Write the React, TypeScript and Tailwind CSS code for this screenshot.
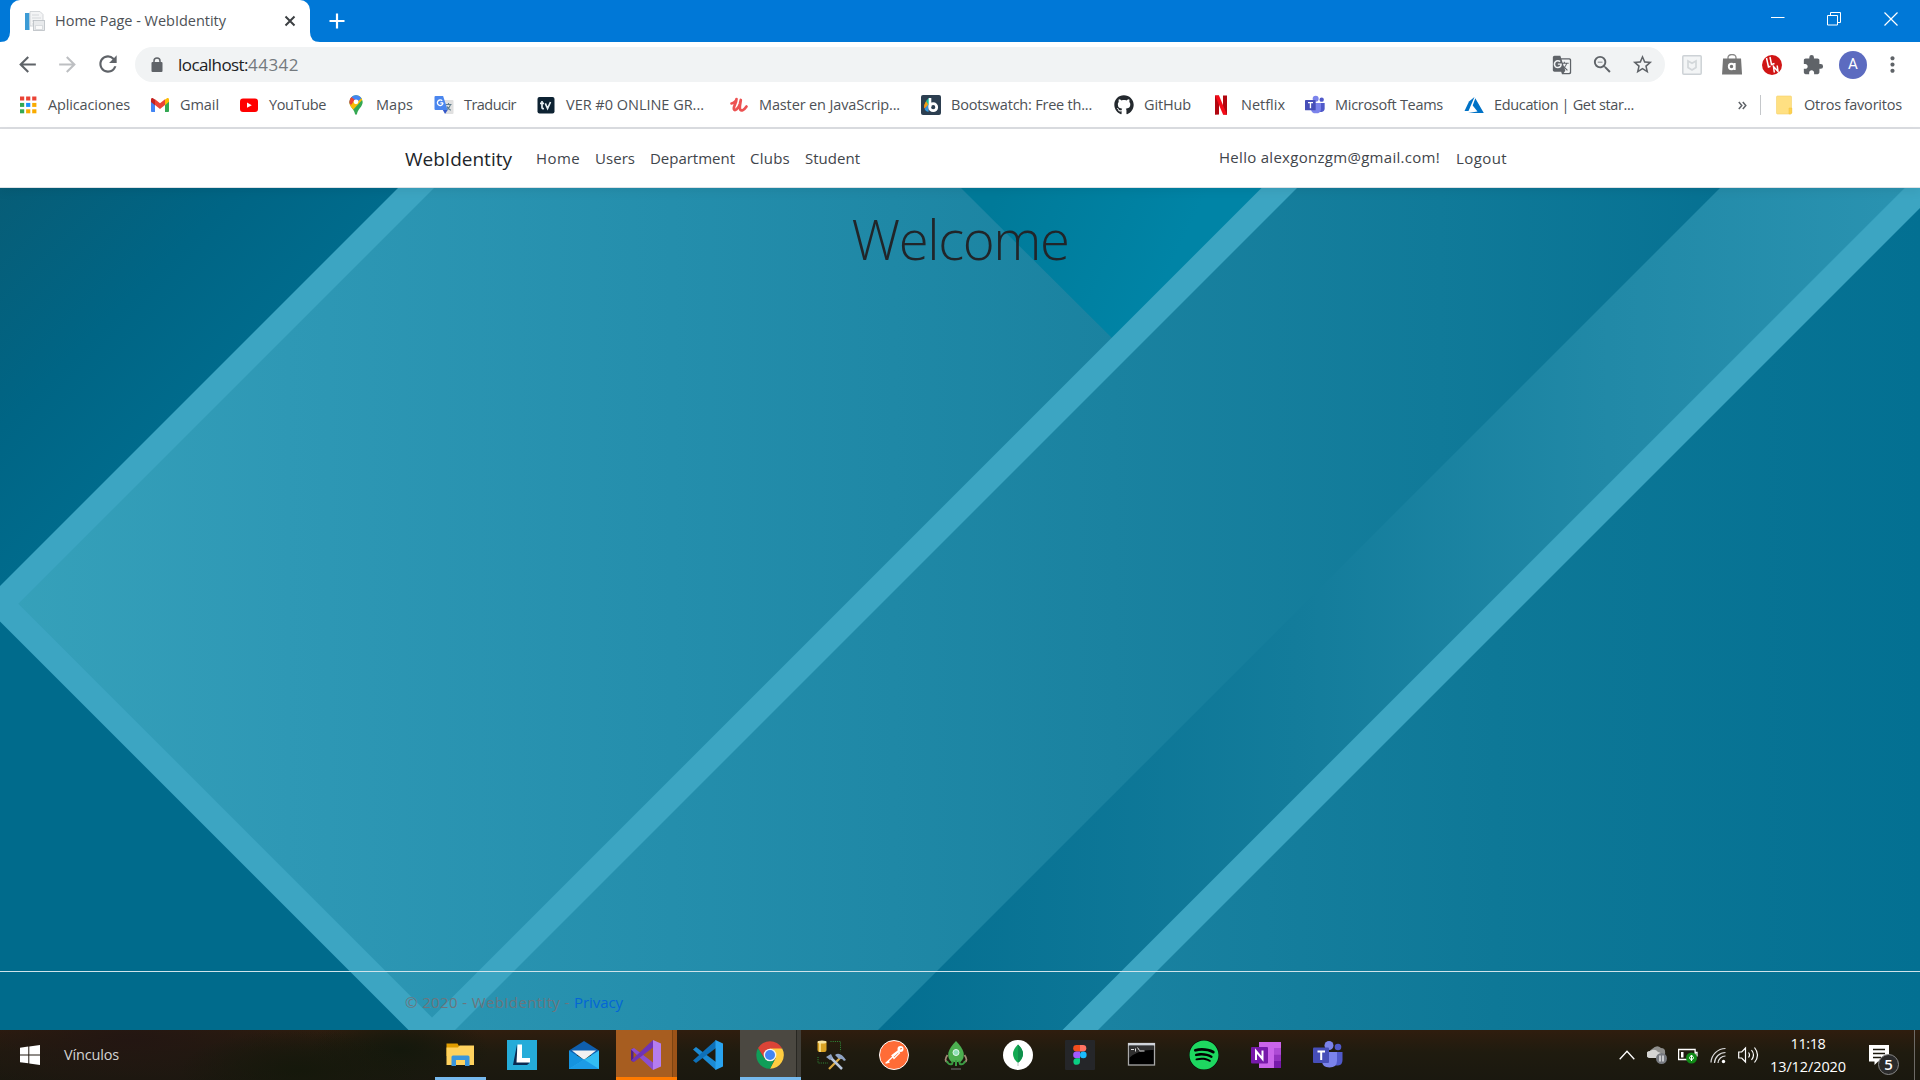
import { useLayoutEffect, useRef, useState } from "react";
import type { ReactNode } from "react";
import {
  MdArrowBack, MdArrowForward, MdRefresh, MdGTranslate,
  MdZoomOut, MdStarBorder, MdExtension, MdMoreVert,
} from "react-icons/md";
import { FaGithub, FaSpotify } from "react-icons/fa";

/** Text whose tracking is adjusted so that it spans exactly `w` pixels. */
function Fit({ w, children, className = "" }: { w: number; children: string; className?: string }) {
  const ref = useRef<HTMLSpanElement>(null);
  const [ls, setLs] = useState(0);
  useLayoutEffect(() => {
    if (ref.current) {
      const natural = ref.current.getBoundingClientRect().width;
      setLs((w - natural) / children.length);
    }
  }, [w, children]);
  return (
    <span ref={ref} className={"inline-block whitespace-pre " + className} style={{ letterSpacing: ls }}>
      {children}
    </span>
  );
}

const Svg = ({ s = 20, vb, children }: { s?: number; vb?: string; children: ReactNode }) => (
  <svg width={s} height={s} viewBox={vb ?? `0 0 ${s} ${s}`} className="block shrink-0">{children}</svg>
);

/* ---------- bookmark icons ---------- */
const appColors = ["#ea4335", "#ea4335", "#ea4335", "#34a853", "#1a90ff", "#f9ab00", "#34a853", "#f9ab00", "#f9ab00"];
const AppsIcon = () => (
  <Svg>{appColors.map((c, i) => <rect key={i} x={2 + (i % 3) * 6.1} y={1.5 + Math.floor(i / 3) * 6.4} width="4.2" height="4" fill={c} />)}</Svg>
);
const GmailIcon = () => (
  <Svg>
    <path d="M1 5v11.2c0 .5.4.8.8.8H5V8z" fill="#4285f4" />
    <path d="M19 5v11.2c0 .5-.4.8-.8.8H15V8z" fill="#34a853" />
    <path d="M15 4.500 17 3.300c1-.6 2 0 2 1.500v2l-4 3.400z" fill="#fbbc04" />
    <path d="M5 4.300 10 8.200l5-3.900v5.600l-5 4-5-4z" fill="#ea4335" />
    <path d="M1 4.800c0-1.500 1-2.100 2-1.500l2 1.200v5.700L1 7z" fill="#c5221f" />
  </Svg>
);
const YouTubeIcon = () => (
  <Svg><rect x="1" y="3.500" width="18" height="13.500" rx="3" fill="#f00" /><path d="m8 7.600 4.800 2.600L8 12.800z" fill="#fff" /></Svg>
);
const MapsIcon = () => (
  <Svg>
    <clipPath id="pin"><path d="M10 .3a6.600 6.600 0 0 0-6.700 6.600c0 4.600 4.700 6.600 5.700 12 .2 1 1.800 1 2 0 1-5.400 5.700-7.400 5.700-12A6.600 6.600 0 0 0 10 .3z" /></clipPath>
    <g clipPath="url(#pin)">
      <rect width="20" height="20" fill="#34a853" />
      <path d="m8 4 9-6v6L6 16 2 10z" fill="#fbbc04" />
      <path d="M6 -1h9l2 3-6 5-6-4z" fill="#4285f4" />
      <path d="M2 3 5.500 2 9 5 5 10 3 8z" fill="#ea4335" />
    </g>
    <circle cx="10" cy="6.800" r="2.400" fill="#fff" />
  </Svg>
);
const TranslateIcon = () => (
  <Svg>
    <path d="M8 5h10.500q1 0 1 1v12q0 1-1 1H12z" fill="#e0e0e0" />
    <path d="M11.500 9.500h6M14.500 8v1.500M12.500 15c2-1.400 3.400-3 4-5.300M13 11.500c.6 1.400 2 2.800 3.800 3.800" stroke="#607d8b" strokeWidth="1.100" fill="none" />
    <path d="M1.500 1h7.600l4.600 14H1.500q-1 0-1-1V2q0-1 1-1z" fill="#4a86ee" />
    <path d="m8.800 15 4.900 0-2.600 4z" fill="#3457c8" />
    <path d="M9 7.800H6.400M9 7.800a2.800 2.800 0 1 1-.8-2" stroke="#fff" strokeWidth="1.300" fill="none" />
  </Svg>
);
const TvIcon = () => (
  <Svg>
    <rect x="1.500" y="2" width="17" height="16.500" rx="2" fill="#0d2232" />
    <path d="M6 6v6.500q0 1.300 2 1M4 8.300h4M9.300 8.300l2.300 5.200L14.500 7" stroke="#e8f0f4" strokeWidth="1.700" fill="none" />
  </Svg>
);
const UdemyIcon = () => (
  <Svg>
    <path d="M2.500 8.500C5 8 7.500 5.500 7.500 4 7.500 8 4.200 11.500 4.800 14c.8 3 4.700-.5 6-5l1-4C11.500 8.500 10 12.500 11.300 14.700c1.200 1.600 3.700.5 6.200-3.200" stroke="#ec5252" strokeWidth="2.700" fill="none" strokeLinecap="round" strokeLinejoin="round" />
  </Svg>
);
const BootswatchIcon = () => (
  <Svg>
    <rect width="20" height="20" rx="2" fill="#2c3e50" />
    <path d="M7.500 4v12L3 13z" fill="#e8503a" /><path d="M7.500 4v7L3 13q0-4 1.500-6z" fill="#f39c12" />
    <path d="M8.500 2.500v9L5 6z" fill="#18bc9c" /><path d="M7.500 9v8q-3-.5-4-3z" fill="#3498db" />
    <path d="M9 3v9" stroke="#fff" strokeWidth="2.600" />
    <circle cx="12.200" cy="12.200" r="3.500" fill="none" stroke="#fff" strokeWidth="2.800" />
  </Svg>
);
const NetflixIcon = () => (
  <Svg>
    <path d="M4 .5h4v19l-4 .3zM12 .5h4v19.300l-4-.3z" fill="#b1060f" /><path d="M4 .5h4l8 19.300-4-.4z" fill="#f50a17" />
  </Svg>
);
const TeamsIcon = ({ s = 20 }: { s?: number }) => (
  <Svg s={s} vb="0 0 30 30">
    <circle cx="25" cy="7" r="3.300" fill="#5059c9" /><circle cx="16" cy="5.500" r="4.500" fill="#7b83eb" />
    <path d="M21 12h8.500v8q0 5-4.500 5.500h-4z" fill="#5059c9" />
    <path d="M9 12h15v8.500q0 7-7.500 7t-7.500-7z" fill="#7b83eb" />
    <rect x="0" y="7.500" width="16" height="15.500" rx="1" fill="#464eb8" />
    <path d="M4.500 11.500h7.500M8.200 11.500v8.500" stroke="#fff" strokeWidth="2" />
  </Svg>
);
const AzureIcon = () => (
  <Svg><path d="M10.500 2 5 6.500.5 16h4z" fill="#0072c6" /><path d="m11.300 3.200-2.600 7.300 4.800 6-9.300 1.500H19.800z" fill="#0072c6" /></Svg>
);
const FolderIcon = () => (
  <Svg><path d="M3.500 1h13q1 0 1 1v16q0 1-1 1h-13q-1 0-1-1V2q0-1 1-1z" fill="#ffe082" stroke="#f5d26a" strokeWidth=".6" /><path d="M15 13h2.800v5q-.6 1-2.800 1z" fill="#ffd24c" stroke="#f0c040" strokeWidth=".5" /></Svg>
);

const bookmarks: { icon: ReactNode; label: string; box: string; w: number }[] = [
  { icon: <AppsIcon />, label: "Aplicaciones", box: "w-[132px]", w: 82 },
  { icon: <GmailIcon />, label: "Gmail", box: "w-[89px]", w: 39 },
  { icon: <YouTubeIcon />, label: "YouTube", box: "w-[107px]", w: 57 },
  { icon: <MapsIcon />, label: "Maps", box: "w-[88px]", w: 37 },
  { icon: <TranslateIcon />, label: "Traducir", box: "w-[102px]", w: 52 },
  { icon: <TvIcon />, label: "VER #0 ONLINE GR...", box: "w-[193px]", w: 138 },
  { icon: <UdemyIcon />, label: "Master en JavaScrip...", box: "w-[192px]", w: 141 },
  { icon: <BootswatchIcon />, label: "Bootswatch: Free th...", box: "w-[193px]", w: 141 },
  { icon: <FaGithub size={20} color="#24292e" />, label: "GitHub", box: "w-[97px]", w: 47 },
  { icon: <NetflixIcon />, label: "Netflix", box: "w-[94px]", w: 44 },
  { icon: <TeamsIcon />, label: "Microsoft Teams", box: "w-[159px]", w: 108 },
  { icon: <AzureIcon />, label: "Education | Get star...", box: "w-[190px]", w: 140 },
];

/* ---------- browser chrome ---------- */
function TitleBar() {
  return (
    <div className="flex h-[42px] items-start bg-[#0078d7]">
      <svg width="10" height="42" className="shrink-0"><path d="M10 32v10H0q10 0 10-10z" fill="#fff" /></svg>
      <div className="flex h-[42px] w-[300px] items-center rounded-t-[10px] bg-white pl-[15px]">
        <Svg s={20}>
          <rect x="0" y="2" width="4.500" height="17" fill="#3c9bd5" />
          <path d="M5 .5h10l3 3V15H5z" fill="#f3f4f5" stroke="#c9cdd1" strokeWidth=".8" />
          <path d="M7 4h7M7 7h9M7 10h5M7 13h4" stroke="#d4d7da" />
          <rect x="8.500" y="9.500" width="11" height="10" fill="#e8eaec" stroke="#b9bdc2" strokeWidth=".8" />
          <path d="M10.500 14.500h7v4h-7z" fill="#fafafa" stroke="#c9cdd1" strokeWidth=".6" />
        </Svg>
        <Fit w={171} className="ml-[10px] text-[14.5px] text-[#4d5156]">Home Page - WebIdentity</Fit>
        <svg width="12" height="12" className="ml-[58px]"><path d="m1.500 1.500 9 9m0-9-9 9" stroke="#3c4043" strokeWidth="2" /></svg>
      </div>
      <svg width="10" height="42" className="shrink-0"><path d="M0 32v10h10q-10 0-10-10z" fill="#fff" /></svg>
      <svg width="16" height="16" className="ml-[9px] mt-[13px]"><path d="M8 .5v15M.5 8h15" stroke="#fff" strokeWidth="2.200" /></svg>
      <div className="ml-auto flex pr-[22px]">
        <svg width="14" height="14" className="mt-[11px]"><path d="M0 6.500h13.500" stroke="#fff" /></svg>
        <svg width="14" height="14" className="ml-[42px] mt-[12px]"><path d="M.5 3.500h10v9.500H.5zM3.500 3.500V.5h10v10h-3" stroke="#fff" fill="none" /></svg>
        <svg width="14" height="14" className="ml-[43px] mt-[12px]"><path d="m.5.5 13 13m0-13-13 13" stroke="#fff" strokeWidth="1.200" /></svg>
      </div>
    </div>
  );
}

function Toolbar() {
  return (
    <div className="flex h-[44px] items-center bg-white pl-[15px] text-[#5f6368]">
      <MdArrowBack size={25} />
      <MdArrowForward size={25} className="ml-[15px] text-[#bdbfc2]" />
      <MdRefresh size={26} className="ml-[15px]" />
      <div className="ml-[14px] mt-px flex h-[35px] w-[1530px] items-center rounded-full bg-[#f1f3f4] pl-[16px] pr-[11px]">
        <svg width="12" height="16" className="mt-px"><rect x=".5" y="5" width="11" height="10" rx="1" fill="#5f6368" /><path d="M3 5.500V4a3 3 0 0 1 6 0v1.500" fill="none" stroke="#5f6368" strokeWidth="1.500" /></svg>
        <Fit w={70} className="ml-[15px] text-[17px] text-[#202124]">localhost:</Fit>
        <Fit w={51} className="text-[17px] text-[#74797e]">44342</Fit>
        <MdGTranslate size={20} className="ml-auto" />
        <MdZoomOut size={23} className="ml-[19px]" />
        <MdStarBorder size={23} className="ml-[17px]" />
      </div>
      <div className="ml-[17px] mt-px flex items-center">
        <Svg s={20}>
          <rect x=".8" y=".8" width="18.400" height="18.400" rx="1" fill="#f3f5f6" stroke="#cdd2d6" strokeWidth="1.500" />
          <path d="M6 6v6.500L10 15l4-2.500V6l-4 2.300z" fill="none" stroke="#d3d7da" strokeWidth="1.700" />
        </Svg>
        <svg width="20" height="21" className="ml-[20px]">
          <path d="M6 5V3.500a4 3 0 0 1 8 0V5" fill="none" stroke="#888" strokeWidth="1.300" />
          <path d="M1 4.500h18l1 16H0z" fill="#757575" />
          <circle cx="9.500" cy="12.500" r="2.700" fill="none" stroke="#fff" strokeWidth="1.900" /><path d="M12.700 9v7" stroke="#fff" strokeWidth="1.900" />
        </svg>
        <svg width="20" height="20" className="ml-[20px]">
          <circle cx="10" cy="10" r="10" fill="#d01515" />
          <path d="m4.500 3 2 9 2-.7M8 2l1.500 7.500 3-1M12.300 17.500l-.8-6 4.500 5-.8-6" fill="none" stroke="#fff" strokeWidth="1.500" />
        </svg>
        <MdExtension size={22} className="ml-[20px]" />
        <div className="ml-[15px] flex h-7 w-7 items-center justify-center rounded-full bg-[#5c6bc0] font-[Roboto] text-[15px] text-white">A</div>
        <MdMoreVert size={25} className="ml-[13px]" />
      </div>
    </div>
  );
}

function BookmarkBar() {
  return (
    <div className="flex h-[43px] items-center border-b-2 border-[#dadce0] bg-white pb-[3px] pl-[18px] text-[14.5px] text-[#4d5156]">
      {bookmarks.map((b) => (
        <div key={b.label} className={"flex shrink-0 items-center gap-[10px] " + b.box}>
          {b.icon}
          <Fit w={b.w}>{b.label}</Fit>
        </div>
      ))}
      <svg width="9" height="9" className="ml-[84px]"><path d="m.8 1 3 3.500-3 3.500M4.800 1l3 3.500-3 3.500" stroke="#5f6368" strokeWidth="1.500" fill="none" /></svg>
      <div className="ml-[13px] h-5 w-px bg-[#c4c7ca]" />
      <div className="ml-[13px] flex items-center gap-[10px]"><FolderIcon /><Fit w={98}>Otros favoritos</Fit></div>
    </div>
  );
}

/* ---------- web page ---------- */
function NavBar() {
  return (
    <header className="relative z-10 h-[59px] border-b border-[#dee2e6] bg-white shadow-[0_4px_10px_rgba(0,0,0,0.06)]">
      <div className="ml-[405px] flex h-[59px] w-[1102px] items-center text-[15px] text-[#3f454b]">
        <Fit w={107} className="pt-[2px] text-[19px] text-[#212529]">WebIdentity</Fit>
        <div className="ml-[24px] flex gap-[15px]">
          <Fit w={44}>Home</Fit>
          <Fit w={40}>Users</Fit>
          <Fit w={85}>Department</Fit>
          <Fit w={40}>Clubs</Fit>
          <Fit w={55}>Student</Fit>
        </div>
        <div className="ml-auto flex items-center gap-[16px]">
          <Fit w={221} className="pb-[2px]">Hello alexgonzgm@gmail.com!</Fit>
          <Fit w={51}>Logout</Fit>
        </div>
      </div>
    </header>
  );
}

const stop = (o: number, c: string) => <stop key={o} offset={o} stopColor={c} />;

/** Diagonal glass panels, drawn in window coordinates. Each one overlaps the panel before it. */
function Backdrop() {
  return (
    <svg className="absolute inset-0" width="1920" height="842" viewBox="0 188 1920 842">
      <defs>
        <linearGradient id="main" gradientUnits="userSpaceOnUse" x1="0" y1="0" x2="1920" y2="0">
          {stop(0, "#36a1ba")}{stop(0.15, "#2e98b5")}{stop(0.35, "#248eac")}{stop(0.58, "#1a82a0")}{stop(0.75, "#107a99")}{stop(0.9, "#067192")}{stop(1, "#056f90")}
        </linearGradient>
        <linearGradient id="strip" gradientUnits="userSpaceOnUse" x1="880" y1="0" x2="1920" y2="0">
          {stop(0, "#046f91")}{stop(0.4, "#137c9b")}{stop(0.7, "#2189a7")}{stop(1, "#2a93b1")}
        </linearGradient>
        <linearGradient id="right" gradientUnits="userSpaceOnUse" x1="1070" y1="0" x2="1920" y2="0">
          {stop(0, "#1b83a2")}{stop(0.5, "#0e7897")}{stop(1, "#037092")}
        </linearGradient>
        <linearGradient id="corner" gradientUnits="userSpaceOnUse" x1="0" y1="188" x2="200" y2="388">
          {stop(0, "#075d77")}{stop(0.6, "#006585")}{stop(1, "#006b8c")}
        </linearGradient>
        <linearGradient id="tri" gradientUnits="userSpaceOnUse" x1="1000" y1="188" x2="1170" y2="270">
          {stop(0, "#007a99")}{stop(1, "#0084a6")}
        </linearGradient>
      </defs>
      <rect y="188" width="1920" height="842" fill="url(#right)" />
      <path d="M0 188h1905L1063 1030H0z" fill="url(#strip)" />
      <path d="M0 188H1720L878 1030H0z" fill="url(#main)" />
      <path d="M0 188h410L0 598z" fill="url(#corner)" />
      <path d="M0 610 420 1030H0z" fill="#006b8c" />
      <path d="M961 188h320L1122 348z" fill="url(#tri)" />
      <path d="M398 188h36L18.300 603.700 432 1017.500 1261.500 188h35.500L455 1030H408.500L0 621.500V586z" fill="#3ca5c2" />
      <path d="M1904.500 188H1920v20L1098 1030h-35.500z" fill="#3ca5c2" />
    </svg>
  );
}

function Page() {
  return (
    <main className="relative flex h-[842px] flex-col overflow-hidden">
      <Backdrop />
      <h1 className="relative mt-[13px] text-center font-light leading-[76px] text-[#212529]">
        <Fit w={217} className="text-[54.5px]">Welcome</Fit>
      </h1>
      <footer className="relative mt-auto h-[59px] border-t border-[#cfe3ea]">
        <div className="ml-[405px] flex h-[60px] w-[1110px] items-center text-[15px] text-[#6c757d]">
          <Fit w={169}>© 2020 - WebIdentity - </Fit>
          <Fit w={49} className="text-[#0366d6]">Privacy</Fit>
        </div>
      </footer>
    </main>
  );
}

/* ---------- taskbar ---------- */
const ExplorerIcon = () => (
  <Svg s={30}>
    <path d="M1.500 3.500h11l1.500 2.500v10H1.500z" fill="#e09d00" /><path d="M1.500 7.500H13l1.500-2H29v19.500H1.500z" fill="#ffd25e" />
    <path d="M6.500 26V17q0-1.500 1.500-1.500h15q1.500 0 1.500 1.500v9H20v-6h-9v6z" fill="#3a96dd" />
  </Svg>
);
const LIcon = () => (
  <Svg s={30}><rect width="30" height="30" fill="#25acd9" /><path d="m10 4.500-4 20.500h14l3-2.500-12-2z" fill="#0a2a52" /><path d="M10.500 4.500h4.500v13.500h8v4.500H9.500z" fill="#fff" /></Svg>
);
const MailIcon = () => (
  <Svg s={30}>
    <path d="M0 10.500 15 1l15 9.500V15H0z" fill="#0f5fae" /><path d="M3 10.500h24L15 20z" fill="#f2f2f2" />
    <path d="M0 10.500 30 29H0z" fill="#1593df" /><path d="M0 29 30 10.500V29z" fill="#32bdf3" /><path d="m15 19.500 15 9.500H0z" fill="#1c9be6" />
  </Svg>
);
const VisualStudioIcon = () => (
  <Svg s={30}>
    <path d="M0 9.500 2.500 8v14L0 20.500z" fill="#52218a" />
    <path d="m0 9.500 3-1.500L22 22.500V30z" fill="#8b4fcf" /><path d="M0 20.500 22 0v7.500L3 22z" fill="#6f33b5" />
    <path d="m22 0 8 3.500v23L22 30z" fill="#b57df0" />
  </Svg>
);
const VSCodeIcon = () => (
  <Svg s={30}><path d="m0 9.500 3-2.500L23 22V30z" fill="#1b8ad3" /><path d="m0 20.500 3 2.500L23 8V0z" fill="#0e70b8" /><path d="m22.500 0 7.500 3.500v23L22.500 30z" fill="#29a3ef" /></Svg>
);
const ChromeIcon = () => (
  <Svg s={30} vb="-15 -15 30 30">
    <path d="M0 0-11.900-6.900A13.800 13.800 0 0 1 11.900-6.900z" fill="#db4437" /><path d="M0-6.500H12.200A13.800 13.800 0 0 1 0 13.800L5.600 3.200z" fill="#ffcd40" />
    <path d="M-11.900-6.900-5.600 3.300 0 6.500 5 4 0 13.800A13.800 13.800 0 0 1-11.900-6.900z" fill="#0f9d58" />
    <path d="M-11.900-6.900-5.600 3.200-2-6z" fill="#db4437" /><circle r="6.300" fill="#f4f4f4" /><circle r="5" fill="#4285f4" />
  </Svg>
);
const SqlToolsIcon = () => (
  <Svg s={30}>
    <rect x=".5" y="1" width="9" height="11" rx="2" fill="#d9a224" /><ellipse cx="5" cy="2" rx="4.500" ry="1.500" fill="#f7e3a0" /><path d="M3 3v9" stroke="#ffe89a" strokeWidth="1.500" />
    <path d="M13.500 1.500h10v10M1 17v6h10" stroke="#2f8f3a" strokeDasharray="1 1.200" fill="none" />
    <path d="m12 29 12-12" stroke="#d9a640" strokeWidth="2.300" /><path d="M12 16 25 29" stroke="#b9c6dc" strokeWidth="2.500" />
    <path d="M9 17l5-3 2 4-3 2zM18 15q5-4 11 5l-2 1q-2-3-5-2z" fill="#8fa3c4" />
  </Svg>
);
const PostmanIcon = () => (
  <Svg s={30}><circle cx="15" cy="15" r="14.500" fill="#ff6c37" stroke="#fff" /><path d="m7 23 12-11M6.500 23l4-1M13 15.500l6-4.500 1.500 2-5.500 5.500z" stroke="#fff" strokeWidth="1.300" fill="none" /><circle cx="21.500" cy="9" r="3" fill="#fff" /><path d="m21 9 2-.5" stroke="#ff6c37" /></Svg>
);
const RocketIcon = () => (
  <Svg s={30}>
    <path d="M6.500 15q-4 6 0 7M23.500 15q4 6 0 7" stroke="#a38b76" strokeWidth="1.800" fill="none" />
    <path d="M15 1Q28 14 19.500 22h-9Q2 14 15 1z" fill="#4caf50" /><circle cx="15" cy="12.500" r="3" fill="#8fe0b8" stroke="#e3f6ee" />
    <path d="M6 21q1 4 5 3l1-3M24 21q-1 4-5 3l-1-3M15 20v6" stroke="#3b9c43" strokeWidth="2" fill="none" /><path d="M10 29h10" stroke="#666" strokeWidth="1.200" />
  </Svg>
);
const MongoIcon = () => (
  <Svg s={30}><circle cx="15" cy="15" r="15" fill="#fff" /><path d="M15 4.500q10 9.500 0 18.500-10-9 0-18.500z" fill="#13aa52" /><path d="M15 4.500q10 9.500 0 18.500z" fill="#0f8f4b" /><path d="M15 22v4" stroke="#b8c4c2" /></Svg>
);
const FigmaIcon = () => (
  <Svg s={30}>
    <rect width="30" height="30" rx="1" fill="#252629" />
    <path d="M15 5h-3.500a3.300 3.300 0 0 0 0 6.600H15z" fill="#f24e1e" /><path d="M15 5h3a3.300 3.300 0 0 1 0 6.600h-3z" fill="#ff7262" />
    <path d="M15 11.600h-3.500a3.300 3.300 0 0 0 0 6.600H15z" fill="#a259ff" /><circle cx="18.300" cy="14.900" r="3.300" fill="#1abcfe" />
    <path d="M15 18.200h-3.500a3.300 3.300 0 1 0 3.500 3.300z" fill="#0acf83" />
  </Svg>
);
const TerminalIcon = () => (
  <Svg s={30}>
    <rect x="1.500" y="3.500" width="26" height="21.500" fill="#000" stroke="#a9a9a9" strokeWidth="1.300" /><rect x="1" y="3" width="27" height="2.500" fill="#d0d4da" />
    <path d="M2 6h25v4Q12 9 2 18z" fill="#303030" /><path d="M4 9.500h3M8.500 8.500v3M10.500 7.500l2 3M12.500 11h5" stroke="#ddd" />
  </Svg>
);
const SpotifyIcon = () => (
  <div className="flex h-[30px] w-[30px] items-center justify-center rounded-full bg-black"><FaSpotify size={30} color="#1ed760" /></div>
);
const OneNoteIcon = () => (
  <Svg s={30}>
    <rect x="8" y="2" width="22" height="26" fill="#ca64ea" /><rect x="23" y="8" width="7" height="6.500" fill="#ae4bd5" /><rect x="23" y="14.500" width="7" height="6.500" fill="#9332bf" /><rect x="23" y="21" width="7" height="7" fill="#7719aa" />
    <rect y="7" width="17" height="16.500" rx="1" fill="#7719aa" /><path d="M5 20V11l6.500 8V10.500" stroke="#fff" strokeWidth="2" fill="none" />
  </Svg>
);

const apps: { icon: ReactNode; tile?: "explorer" | "vs" | "chrome" }[] = [
  { icon: <ExplorerIcon />, tile: "explorer" }, { icon: <LIcon /> }, { icon: <MailIcon /> }, { icon: <VisualStudioIcon />, tile: "vs" },
  { icon: <VSCodeIcon /> }, { icon: <ChromeIcon />, tile: "chrome" }, { icon: <SqlToolsIcon /> }, { icon: <PostmanIcon /> },
  { icon: <RocketIcon /> }, { icon: <MongoIcon /> }, { icon: <FigmaIcon /> }, { icon: <TerminalIcon /> },
  { icon: <SpotifyIcon /> }, { icon: <OneNoteIcon /> }, { icon: <TeamsIcon s={30} /> },
];
const tiles = {
  explorer: "w-[51px] mr-[11px] pl-[10px] border-b-3 border-[#76b9ed]",
  vs: "w-[61px] ml-[-5px] mr-[6px] pl-[15px] border-b-3 border-[#ff7a00] bg-[linear-gradient(90deg,#a75d20_56px,#7d4412_56px,#7d4412_57px,#9c5318_57px)]",
  chrome: "w-[61px] ml-[-5px] mr-[6px] pl-[15px] border-b-3 border-[#76b9ed] bg-[linear-gradient(90deg,#4b4841_56px,#282722_56px,#282722_57px,#403e38_57px)]",
};

function Taskbar() {
  return (
    <div className="flex h-[50px] items-center overflow-hidden bg-[radial-gradient(ellipse_120px_40px_at_300px_40px,#15180b,transparent),radial-gradient(ellipse_90px_40px_at_400px_20px,#14180c,transparent),radial-gradient(ellipse_220px_60px_at_130px_10px,#231612,transparent),linear-gradient(180deg,#2f1d0e,#1f1b0f_45%,#1a180f)] text-white">
      <svg width="20" height="20" className="ml-[20px]"><path d="M0 2.800 8.300 1.600v7.800H0zM9.300 1.400 20 0v9.400H9.300zM0 10.400h8.300v7.900L0 17.200zM9.300 10.400H20V20L9.300 18.500z" fill="#fff" /></svg>
      <div className="ml-[24px] w-[371px] text-[14.5px] text-[#d4d4d4]"><Fit w={55}>Vínculos</Fit></div>
      {apps.map((a, i) => (
        <div key={i} className={"flex h-[50px] shrink-0 items-center " + (a.tile ? tiles[a.tile] + " pt-[3px]" : "w-[62px] pl-[10px]")}>{a.icon}</div>
      ))}
      <div className="ml-auto flex h-[50px] items-center">
        <svg width="16" height="10" className="mr-[12px]"><path d="m.7 9.300 7.300-8 7.300 8" fill="none" stroke="#fff" strokeWidth="1.300" /></svg>
        <svg width="21" height="20" className="mr-[10px]">
          <path d="M4 11a4 4 0 0 1 1-7q5-5 9-1 5 0 4 6l-3 4H3q-3-1 1-2z" fill="#8e8e8c" /><path d="M3 13a3.500 3.500 0 0 1 0-7q5-3 8 1 5 1 4 6z" fill="#d5d5d3" />
          <circle cx="14.500" cy="13.500" r="5.500" fill="#777a80" /><path d="M13 10.500v6M16 10.500v6" stroke="#fff" strokeWidth="1.200" />
        </svg>
        <svg width="20" height="18" className="mr-[12px]">
          <path d="M.6 3.500h16.500v10H.6zM17.500 6.500h1.500v4" fill="none" stroke="#fff" strokeWidth="1.300" /><path d="M3 6h2.500v5.500H3z" fill="#fff" />
          <circle cx="13.500" cy="12" r="5.500" fill="#0f8a16" /><path d="M13.500 9v6M11.500 11.500q0 2 2 2t2-2l-2-2.500z" stroke="#fff" fill="none" />
        </svg>
        <svg width="16" height="17" className="mr-[12px]">
          <path d="M1 15.500A14.500 14.500 0 0 1 15.500 1.500M4.500 16A11 11 0 0 1 15.500 5.500M8 16a7.500 7.500 0 0 1 7.500-7" fill="none" stroke="#ddd" strokeWidth="1.200" /><circle cx="13.500" cy="14.500" r="1.700" fill="#fff" />
        </svg>
        <svg width="21" height="18" className="mr-[11px]">
          <path d="M.7 6h3L7.500 2v14L3.700 12h-3zM10.500 6.500q2 2.500 0 5M13.500 4q4 5 0 10M16.500 1.500q6 7.500 0 15" fill="none" stroke="#fff" strokeWidth="1.200" />
        </svg>
        <div className="flex w-[76px] flex-col items-center text-[14.5px] leading-[23px]"><Fit w={35}>11:18</Fit><Fit w={76}>13/12/2020</Fit></div>
        <div className="relative ml-[23px] h-[30px] w-[30px]">
          <svg width="20" height="20" className="absolute left-0 top-[5px]"><path d="M0 0h20v16.500H9L5.500 20v-3.500H0z" fill="#fff" /><path d="M4 4.500h12M4 8.500h12M4 12.500h8" stroke="#1b180e" strokeWidth="1.300" /></svg>
          <div className="absolute left-[9px] top-[14px] flex h-[21px] w-[21px] items-center justify-center rounded-full border border-[#888] bg-[#2b2b2b] text-[15px] font-semibold">5</div>
        </div>
        <div className="ml-[15px] mr-[5px] h-[50px] w-px bg-[#6d6a66]" />
      </div>
    </div>
  );
}

export default function App() {
  return (
    <div className="h-[1080px] w-[1920px] overflow-hidden bg-white font-['Open_Sans','Noto_Sans',sans-serif]">
      <TitleBar />
      <Toolbar />
      <BookmarkBar />
      <NavBar />
      <Page />
      <Taskbar />
    </div>
  );
}
